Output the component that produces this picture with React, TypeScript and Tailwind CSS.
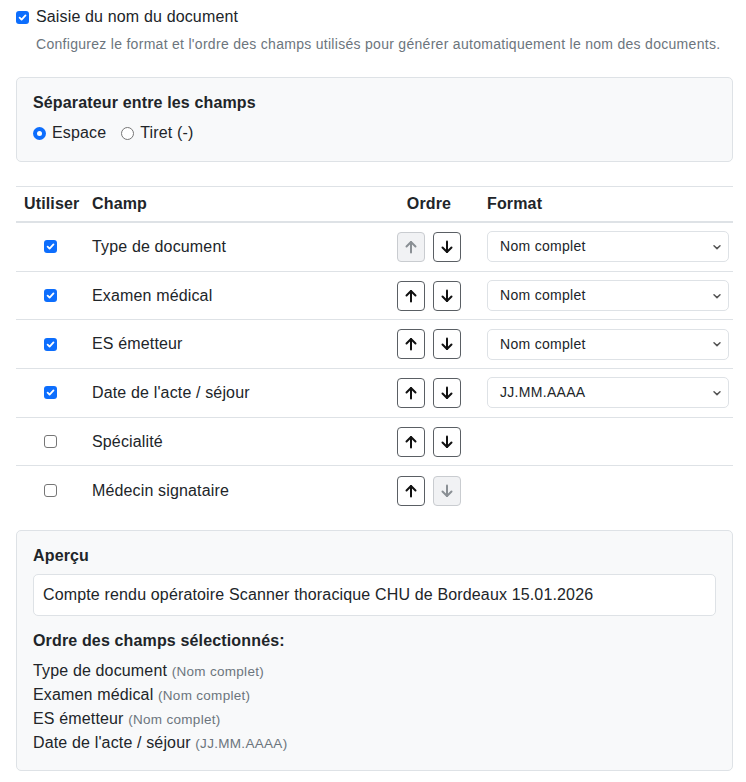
import { useState } from 'react';

type Field = { name: string; used: boolean; format?: string };

const fields: Field[] = [
  { name: 'Type de document', used: true, format: 'Nom complet' },
  { name: 'Examen médical', used: true, format: 'Nom complet' },
  { name: 'ES émetteur', used: true, format: 'Nom complet' },
  { name: "Date de l'acte / séjour", used: true, format: 'JJ.MM.AAAA' },
  { name: 'Spécialité', used: false },
  { name: 'Médecin signataire', used: false },
];

const Arrow = ({ down, muted }: { down?: boolean; muted?: boolean }) => (
  <svg
    width="14"
    height="14"
    viewBox="0 0 14 14"
    fill="none"
    stroke={muted ? '#8a8f94' : '#111'}
    strokeWidth="2"
    strokeLinecap="round"
    strokeLinejoin="round"
    className={down ? 'rotate-180' : ''}
  >
    <path d="M7 12.5V2" />
    <path d="M2.5 6.5 7 2l4.5 4.5" />
  </svg>
);

const OrderButton = ({ down, disabled }: { down?: boolean; disabled?: boolean }) => (
  <button
    className={
      disabled
        ? 'flex h-[30px] w-[28px] items-center justify-center rounded-[4px] border border-[#c9ccd0] bg-[#f1f2f4]'
        : 'flex h-[30px] w-[28px] items-center justify-center rounded-[4px] border border-[#5a5f64] bg-white'
    }
  >
    <Arrow down={down} muted={disabled} />
  </button>
);

const Check = ({ checked }: { checked: boolean }) =>
  checked ? (
    <span className="flex h-[13px] w-[13px] items-center justify-center rounded-[3px] bg-[#0d6efd]">
      <svg width="9" height="9" viewBox="0 0 10 10" fill="none" stroke="white" strokeWidth="2" strokeLinecap="round" strokeLinejoin="round">
        <path d="M1.8 5.2 4 7.4 8.3 2.6" />
      </svg>
    </span>
  ) : (
    <span className="block h-[13px] w-[13px] rounded-[3px] border border-[#767676] bg-white" />
  );

const Select = ({ value }: { value: string }) => (
  <div className="flex h-[31px] w-[242px] items-center justify-between rounded-[5px] border border-[#dee2e6] bg-white pl-[12px] pr-[6px] text-[14px] tracking-[0.3px] text-[#212529]">
    <span>{value}</span>
    <svg width="10" height="10" viewBox="0 0 10 10" fill="none" stroke="#555" strokeWidth="1.5" strokeLinecap="round" strokeLinejoin="round">
      <path d="M2 3.8 5 6.6 8 3.8" />
    </svg>
  </div>
);

const Radio = ({ on }: { on: boolean }) => (
  <span className={on ? 'flex h-[13px] w-[13px] items-center justify-center rounded-full bg-[#0d6efd]' : 'block h-[13px] w-[13px] rounded-full border border-[#767676] bg-white'}>
    {on && <span className="block h-[5px] w-[5px] rounded-full bg-white" />}
  </span>
);

export default function App() {
  const [sep, setSep] = useState('space');
  const used = fields.filter((f) => f.used);

  return (
    <div className="min-h-[782px] bg-white pl-4 pr-[13px] pt-[8px] tracking-[0.15px] text-[#212529]" style={{ fontFamily: '"Liberation Sans", Arial, sans-serif' }}>
      {/* title */}
      <div className="flex items-center gap-[7px] h-[18px]">
        <Check checked />
        <span className="text-[16px]">Saisie du nom du document</span>
      </div>
      <p className="mt-[9px] pl-[20px] text-[14px] leading-[18px] tracking-[0.29px] text-[#6c757d]">
        Configurez le format et l'ordre des champs utilisés pour générer automatiquement le nom des documents.
      </p>

      {/* separator */}
      <div className="mt-[24px] h-[85px] rounded-[5px] border border-[#dee2e6] bg-[#f8f9fa] px-4 pt-[13px]">
        <div className="text-[16px] font-bold leading-[24px]">Séparateur entre les champs</div>
        <div className="mt-[6px] flex items-center text-[16px] leading-[24px]">
          <label className="flex items-center gap-[6px]" onClick={() => setSep('space')}>
            <Radio on={sep === 'space'} />
            Espace
          </label>
          <label className="ml-[15px] flex items-center gap-[6px]" onClick={() => setSep('dash')}>
            <Radio on={sep === 'dash'} />
            Tiret (-)
          </label>
        </div>
      </div>

      {/* table */}
      <div className="mt-[24px] border-t border-[#dee2e6]">
        <div className="grid h-[36px] grid-cols-[68px_295px_100px_254px] items-center border-b-2 border-[#dee2e6] text-[16px] font-bold">
          <div className="pl-[8px]">Utiliser</div>
          <div className="pl-[8px]">Champ</div>
          <div className="text-center">Ordre</div>
          <div className="pl-[8px]">Format</div>
        </div>
        {fields.map((f, i) => (
          <div
            key={f.name}
            className={
              i === fields.length - 1
                ? 'grid h-[48.7px] grid-cols-[68px_295px_100px_254px] items-center text-[16px]'
                : 'grid h-[48.7px] grid-cols-[68px_295px_100px_254px] items-center border-b border-[#dee2e6] text-[16px]'
            }
          >
            <div className="flex justify-center pl-[1px]">
              <Check checked={f.used} />
            </div>
            <div className="pl-[8px]">{f.name}</div>
            <div className="flex justify-center gap-[8px]">
              <OrderButton disabled={i === 0} />
              <OrderButton down disabled={i === fields.length - 1} />
            </div>
            <div className="pl-[8px]">{f.format && <Select value={f.format} />}</div>
          </div>
        ))}
      </div>

      {/* preview */}
      <div className="mt-[15px] rounded-[5px] border border-[#dee2e6] bg-[#f8f9fa] px-4 pb-[15px] pt-[13px]">
        <div className="text-[16px] font-bold leading-[24px]">Aperçu</div>
        <div className="mt-[6px] flex h-[42px] items-center rounded-[5px] border border-[#dee2e6] bg-white px-[9px] text-[16px]">
          Compte rendu opératoire Scanner thoracique CHU de Bordeaux 15.01.2026
        </div>
        <div className="mt-[13px] text-[16px] font-bold leading-[24px]">Ordre des champs sélectionnés:</div>
        <div className="mt-[6px]">
          {used.map((f) => (
            <div key={f.name} className="h-[24px] text-[16px] leading-[24px]">
              {f.name} <span className="text-[13.5px] leading-none tracking-[0.3px] text-[#6c757d]">({f.format})</span>
            </div>
          ))}
        </div>
      </div>
    </div>
  );
}
